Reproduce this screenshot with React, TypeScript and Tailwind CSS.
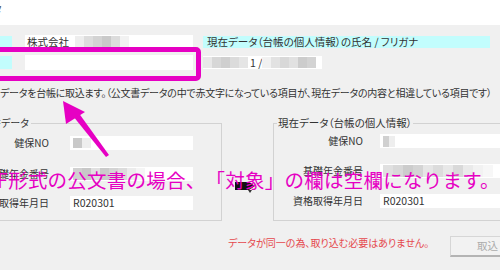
import React from 'react';

const jp = "font-['Noto_Sans_CJK_JP','Noto_Sans',sans-serif]";

const Mosaic: React.FC<{ cells: string[]; w?: number; h?: number }> = ({ cells, w = 9, h = 11 }) => (
  <div className="flex shrink-0">
    {cells.map((c, i) => (
      <div key={i} style={{ background: c, width: w, height: h }} />
    ))}
  </div>
);

const Field: React.FC<{ label: string; labelW: number; gap: number; mt: number; children?: React.ReactNode; inputW: number }> = ({
  label,
  labelW,
  gap,
  mt,
  children,
  inputW,
}) => (
  <div className="flex items-center h-[14px]" style={{ marginTop: mt }}>
    <div className="text-right text-[10px] leading-[14px] whitespace-nowrap shrink-0" style={{ width: labelW }}>
      {label}
    </div>
    <div className="h-[14px] bg-white flex items-center pl-[3px] text-[10.5px] leading-[14px] shrink-0" style={{ marginLeft: gap, width: inputW }}>
      {children}
    </div>
  </div>
);

export default function App() {
  return (
    <div className={`relative w-[500px] h-[270px] overflow-hidden bg-[#f0f0f0] text-[#333] leading-[14px] ${jp} [font-feature-settings:'palt']`}>
      {/* window title strip */}
      <div className="h-[25px] bg-white pt-[2px] text-[11px] leading-[14px] whitespace-nowrap">
        <span className="-ml-[8px] text-[#555]">タ</span>
      </div>

      {/* name row */}
      <div className="flex items-center mt-[10px] h-[13px]">
        <div className="w-[12px] h-[11px] bg-[#c2fdfd] shrink-0" />
        <div className="ml-[13px] w-[168px] h-[13px] bg-white flex items-center pl-[2px] gap-[6px] text-[10.5px] shrink-0">
          <span>株式会社</span>
          <Mosaic cells={['#eeeeee', '#dddddd', '#d3d3d3', '#c9c9c9', '#dcdcdc', '#f2f2f2']} />
        </div>
        <div className="ml-[10px] w-[287px] h-[12px] bg-[#c2fdfd] pl-[4px] text-[10.5px] leading-[12px] whitespace-nowrap shrink-0">
          現在データ（台帳の個人情報）の氏名 / フリガナ
        </div>
      </div>

      {/* furigana row */}
      <div className="flex items-center mt-[7px] h-[15px]">
        <div className="w-[12px] h-[13px] bg-[#c2fdfd] shrink-0" />
        <div className="ml-[13px] w-[168px] h-[15px] bg-white shrink-0" />
        <div className="ml-[10px] w-[119px] h-[13px] bg-white flex items-center text-[10.5px] shrink-0">
          <Mosaic cells={['#e8e8e8', '#d7d7d7', '#cfcfcf', '#dbdbdb', '#e5e5e5']} />
          <span className="ml-[2px]">1 /</span>
          <Mosaic cells={['#f1f1f1', '#e2e2e2', '#d8d8d8', '#e1e1e1', '#cccccc', '#d3d3d3']} />
        </div>
      </div>

      {/* note */}
      <div className="mt-[17px] h-[12px] text-[10px] leading-[12px] whitespace-nowrap tracking-[-0.25px]">
        データを台帳に取込ます。（公文書データの中で赤文字になっている項目が、現在データの内容と相違している項目です）
      </div>

      {/* group boxes */}
      <div className="flex items-start mt-[24px]">
        <div className="-ml-[40px] w-[262px] h-[98px] border border-[#d2d2d2] shrink-0">
          <div className="w-fit h-[14px] -mt-[8px] ml-[8px] px-[2px] bg-[#f0f0f0] text-[10px] leading-[14px] whitespace-nowrap">
            公文書データ
          </div>
          <Field label="健保NO" labelW={88} gap={21} mt={6} inputW={123}>
            <Mosaic cells={['#c9c9c9', '#eeeeee']} w={9} h={10} />
          </Field>
          <Field label="基礎年金番号" labelW={88} gap={21} mt={17} inputW={123}>
            <Mosaic cells={['#d0d0d0', '#c8c8c8', '#e0e0e0', '#cacaca', '#d4d4d4', '#dcdcdc', '#ececec', '#f5f5f5']} w={9} h={12} />
          </Field>
          <Field label="資格取得年月日" labelW={88} gap={21} mt={15} inputW={123}>
            <span>R020301</span>
          </Field>
        </div>

        <div className="ml-[51px] w-[260px] h-[98px] border border-[#d2d2d2] shrink-0">
          <div className="w-fit h-[14px] -mt-[8px] ml-[3px] px-[1px] bg-[#f0f0f0] text-[10.5px] leading-[14px] whitespace-nowrap">
            現在データ（台帳の個人情報）
          </div>
          <Field label="健保NO" labelW={89} gap={17} mt={4} inputW={160}>
            <Mosaic cells={['#d0d0d0', '#eeeeee']} w={6} h={11} />
          </Field>
          <Field label="基礎年金番号" labelW={89} gap={17} mt={16} inputW={160}>
            <Mosaic cells={['#e0e0e0', '#d8d8d8', '#cccccc', '#d4d4d4', '#e6e6e6', '#dcdcdc', '#e8e8e8', '#d9d9d9', '#eaeaea', '#f2f2f2', '#f7f7f7']} w={10} h={12} />
          </Field>
          <Field label="資格取得年月日" labelW={89} gap={17} mt={16} inputW={160}>
            <span>R020301</span>
          </Field>
        </div>
      </div>

      {/* footer */}
      <div className="flex items-start mt-[15px] h-[21px]">
        <div className="ml-[228px] w-[222px] mt-[1px] text-[10px] leading-[12px] text-[#e5484d] whitespace-nowrap shrink-0">
          データが同一の為、取り込む必要はありません。
        </div>
        <button
          disabled
          className="w-[62px] h-[21px] bg-[#f2f2f2] border border-[#d6d6d6] border-b-2 border-b-[#b4b4b4] text-left pl-[26px] text-[10.5px] text-[#ababab] shrink-0"
        >
          取込
        </button>
      </div>

      {/* transfer arrow between groups */}
      <svg className="absolute left-[233px] top-[179px]" width="24" height="14" viewBox="0 0 24 14">
        <path d="M2 3 H16 L22 7 L16 11 H2 Z" fill="#111" />
        <path d="M15 11 L19 11 L17 14 Z" fill="#333" />
      </svg>

      {/* annotation: highlight box */}
      <div className="absolute -left-[10px] top-[47px] w-[211px] h-[34px] border-[5px] border-[#e600c3] rounded-[5px]" />

      {/* annotation: arrow */}
      <svg className="absolute left-0 top-0 pointer-events-none" width="500" height="270">
        <polygon points="63,101 66,124 85,112" fill="#e600c3" />
        <polygon points="73,116 78,112 109,155 106,157" fill="#e600c3" />
      </svg>

      {/* annotation: big caption */}
      <div className="absolute -left-[3px] top-[169px] text-[19.5px] leading-[22px] tracking-[0.25px] text-[#e600c3] whitespace-nowrap [font-feature-settings:normal] [text-spacing-trim:space-all]">
        F形式の公文書の場合、「対象」の欄は空欄になります。
      </div>
    </div>
  );
}
